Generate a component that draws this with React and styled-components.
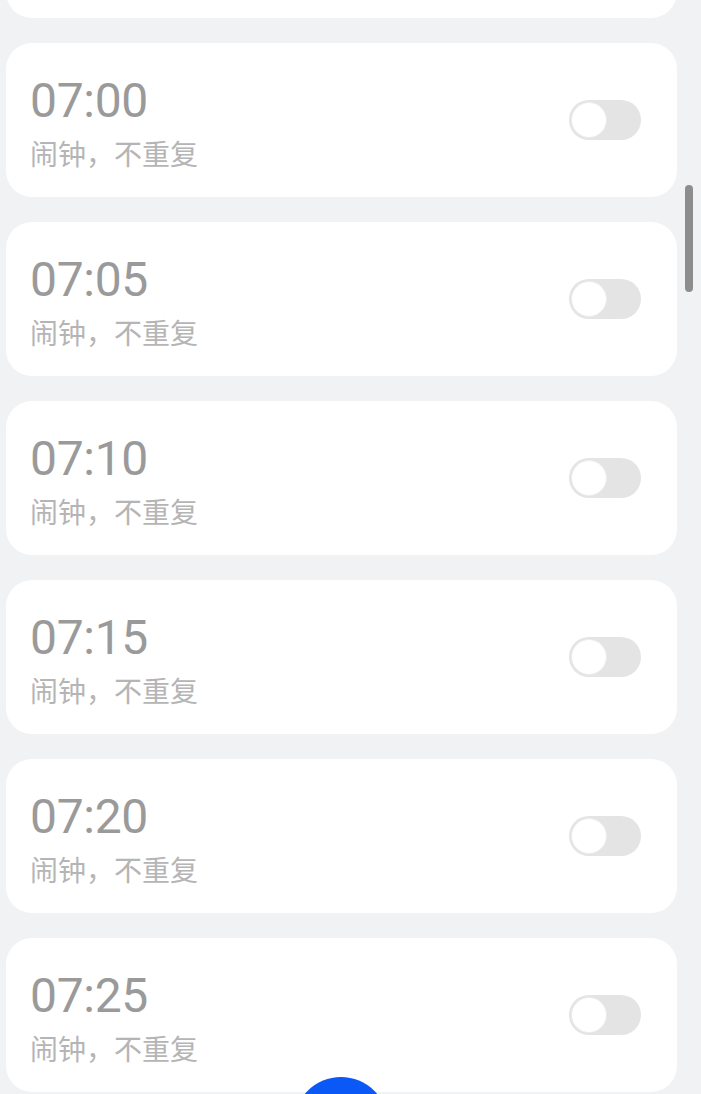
import React from "react"
import styled, { createGlobalStyle } from "styled-components"

const GlobalStyle = createGlobalStyle`
  html, body {
    margin: 0;
    padding: 0;
    background: #f1f2f4;
    overflow: hidden;
  }
  body {
    font-family: Roboto, "Noto Sans CJK SC", sans-serif;
  }
`

const Page = styled.main`
  position: relative;
  height: 1094px;
  overflow: hidden;
`

// scrolled list, first card is mostly above the top edge
const List = styled.div`
  display: flex;
  flex-direction: column;
  gap: 25px;
  margin-top: -136px;
  padding-left: 6px;
  width: 671px;
`

const Card = styled.div`
  display: flex;
  align-items: center;
  justify-content: space-between;
  height: 154px;
  box-sizing: border-box;
  padding: 4px 36px 0 24px;
  background: #fff;
  border-radius: 26px;
`

const Info = styled.div`
  display: flex;
  flex-direction: column;
`

const Time = styled.div`
  font-family: Roboto, sans-serif;
  font-size: 48px;
  line-height: 56px;
  color: #9a9a9a;
  letter-spacing: -0.3px;
`

const Label = styled.div`
  font-family: "Noto Sans CJK SC", sans-serif;
  font-size: 28px;
  line-height: 36px;
  margin-top: 6px;
  color: #b5b5b5;
`

const Toggle = styled.div`
  position: relative;
  width: 72px;
  height: 40px;
  margin-top: -4px;
  border-radius: 20px;
  background: ${(p) => (p.on ? "#0a59f7" : "#e4e4e4")};

  &::after {
    content: "";
    position: absolute;
    top: 2px;
    left: ${(p) => (p.on ? "34px" : "2px")};
    width: 34px;
    height: 34px;
    border-radius: 50%;
    background: #fff;
    border: 1px solid #ececec;
  }
`

const ScrollBar = styled.div`
  position: absolute;
  top: 185px;
  left: 685px;
  width: 8px;
  height: 107px;
  border-radius: 4px;
  background: #8d8d8d;
`

const Fab = styled.div`
  position: absolute;
  top: 1077px;
  left: 294px;
  width: 94px;
  height: 94px;
  border-radius: 50%;
  background: #0a59f7;
`

const alarms = ["07:00", "07:05", "07:10", "07:15", "07:20", "07:25"]

export default function App() {
  return (
    <Page>
      <GlobalStyle />
      <List>
        {/* card scrolled out of view above, only its bottom edge shows */}
        <Card />
        {alarms.map((t) => (
          <Card key={t}>
            <Info>
              <Time>{t}</Time>
              <Label>闹钟，不重复</Label>
            </Info>
            <Toggle />
          </Card>
        ))}
      </List>
      <ScrollBar />
      <Fab />
    </Page>
  )
}
